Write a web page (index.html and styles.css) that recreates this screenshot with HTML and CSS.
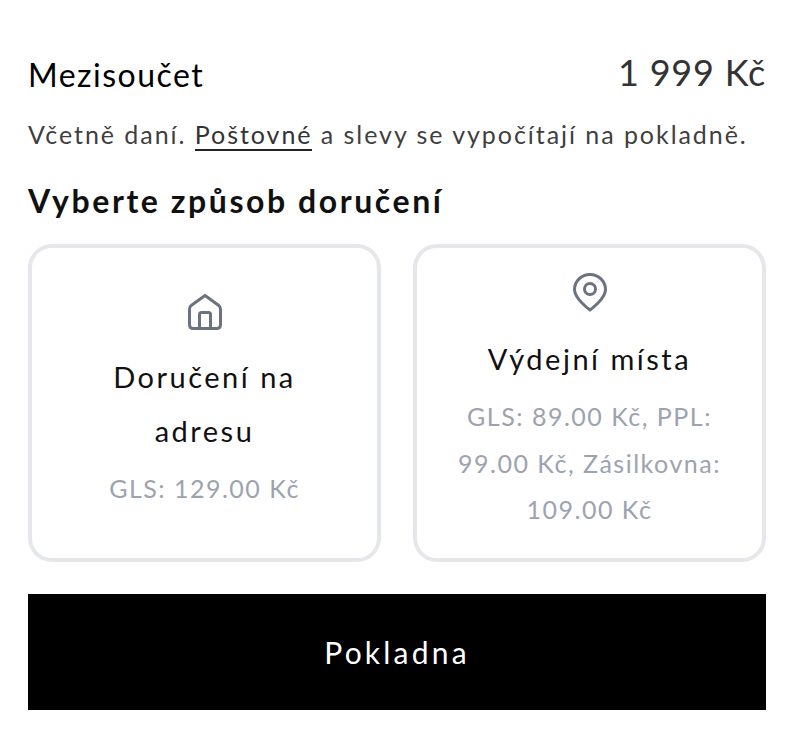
FILE: index.html
```html
<!DOCTYPE html>
<html lang="cs">
<head>
<meta charset="utf-8">
<title>Košík</title>
<link rel="stylesheet" href="styles.css">
</head>
<body>
<main class="summary">
  <div class="subtotal">
    <span class="subtotal-label">Mezisoučet</span>
    <span class="subtotal-price">1 999 Kč</span>
  </div>
  <p class="note">Včetně daní. <a class="note-link" href="#">Poštovné</a> a slevy se vypočítají na pokladně.</p>
  <h2 class="heading">Vyberte způsob doručení</h2>
  <div class="options">
    <div class="card">
      <svg class="icon" width="34" height="36" viewBox="0 0 34 36" fill="none" stroke="#6b7280" stroke-width="3" stroke-linejoin="round" stroke-linecap="round">
        <path d="M17 1.500 L30.800 11.500 Q32.500 12.800 32.500 15 V30.500 Q32.500 34.500 28.500 34.500 H5.500 Q1.500 34.500 1.500 30.500 V15 Q1.500 12.800 3.200 11.500 Z"/>
        <path d="M11.500 34.500 V20.500 Q11.500 18.500 13.500 18.500 H20.500 Q22.500 18.500 22.500 20.500 V34.500"/>
      </svg>
      <div class="card-title">Doručení na adresu</div>
      <div class="card-text">GLS: 129.00 Kč</div>
    </div>
    <div class="card">
      <svg class="icon" width="34" height="39" viewBox="0 0 34 39" fill="none" stroke="#6b7280" stroke-width="3" stroke-linejoin="round">
        <path d="M17 37 C17 37 32.500 26 32.500 16.500 A15.500 15 0 0 0 1.500 16.500 C1.500 26 17 37 17 37 Z"/>
        <circle cx="17" cy="16" r="5.500"/>
      </svg>
      <div class="card-title">Výdejní místa</div>
      <div class="card-text">GLS: 89.00 Kč, PPL: 99.00 Kč, Zásilkovna: 109.00 Kč</div>
    </div>
  </div>
  <button class="checkout" type="button">Pokladna</button>
</main>
</body>
</html>
```
FILE: styles.css
```css
* { box-sizing: border-box; }
html, body { margin: 0; background: #fff; }
body {
  font-family: "Lato", "Noto Sans", sans-serif;
  color: #000;
}
.summary { padding: 50px 28px 30px; }
.subtotal {
  display: flex;
  justify-content: space-between;
  align-items: flex-start;
}
.subtotal-label {
  font-size: 32px;
  line-height: 50px;
  letter-spacing: 1.5px;
}
.subtotal-price {
  font-size: 36px;
  line-height: 44px;
  letter-spacing: 0.800px;
  color: #333;
}
.note {
  margin: 11px 0 0;
  font-size: 25px;
  line-height: 46px;
  letter-spacing: 1.950px;
  color: #3f3f3f;
  white-space: nowrap;
}
.note-link {
  color: #333;
  text-decoration: none;
  border-bottom: 2px solid #222;
}
.heading {
  margin: 22px 0 0;
  font-size: 32px;
  line-height: 44px;
  font-weight: 700;
  letter-spacing: 2.570px;
  color: #111;
}
.options {
  display: grid;
  grid-template-columns: 1fr 1fr;
  gap: 32px;
  margin-top: 21px;
}
.card {
  height: 318px;
  border: 4px solid #e5e7eb;
  border-radius: 24px;
  padding: 0 30px;
  display: flex;
  flex-direction: column;
  align-items: center;
  justify-content: center;
  text-align: center;
}
.icon { display: block; margin-bottom: 20px; }
.card-title {
  font-size: 29px;
  line-height: 54px;
  letter-spacing: 2.500px;
  color: #111;
}
.card-text {
  margin-top: 7px;
  font-size: 25px;
  line-height: 46.500px;
  letter-spacing: 1.500px;
  color: #9ca3af;
}
.checkout {
  display: block;
  width: 100%;
  height: 116px;
  margin-top: 32px;
  border: 0;
  background: #000;
  color: #fff;
  font-family: inherit;
  font-size: 30px;
  letter-spacing: 3.200px;
}
```
